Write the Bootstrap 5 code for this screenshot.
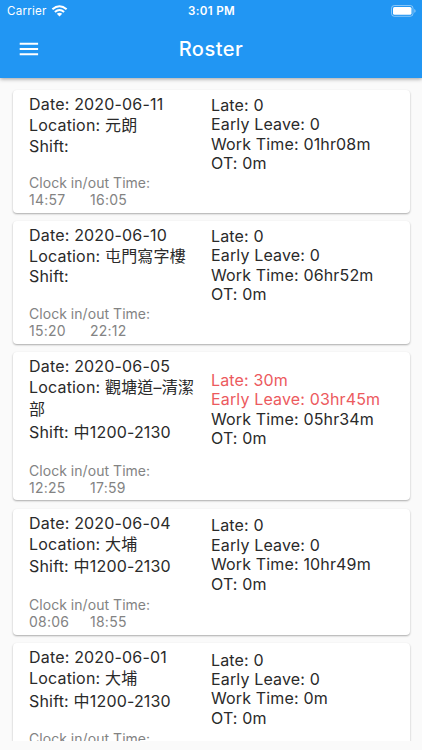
<!DOCTYPE html>
<html lang="zh-Hant">
<head>
<meta charset="utf-8">
<meta name="viewport" content="width=device-width, initial-scale=1">
<title>Roster</title>
<link href="https://cdn.jsdelivr.net/npm/bootstrap@5.3.0/dist/css/bootstrap.min.css" rel="stylesheet">
<style>
body{font-family:Inter,"Noto Sans CJK TC",sans-serif;background:#fafafa;color:#2a2a2a;height:750px}
.app-header{background:#2196f3;height:77.5px;box-shadow:0 1px 4px rgba(0,0,0,.38);z-index:2}
.status-bar{height:22px;font-size:11.6px;line-height:22px;padding:0 6px 0 7px}
.status-bar .carrier{letter-spacing:.22px}
.status-bar .clock{font-size:11.6px;font-weight:600;letter-spacing:.3px}
.title-bar{height:54px;padding:0 19px}
.title-bar h1{font-size:20px;font-weight:500;letter-spacing:.5px;line-height:24px}
.roster{height:663.5px;padding:12.3px 12.5px 0;gap:8.2px}
.shift-card{border-radius:4px;padding:4px 0 4px 16.5px;box-shadow:0 1px 2px rgba(0,0,0,.32)}
.shift-card.partial{height:126px}
.info{width:182px;font-size:16px;letter-spacing:.18px}
.info .latin{line-height:20px;height:20px}
.info .shift-empty{height:19.5px;line-height:18.6px}
.info .cjk{line-height:22.7px}
.punch{margin-top:18.2px;font-size:14px;line-height:17.2px;letter-spacing:.25px;color:#838383}
.punch .punch-label{letter-spacing:.04px}
.punch .time-in{width:61px}
.totals{font-size:16px;line-height:19.35px;letter-spacing:.15px;padding-bottom:33px}
.over{color:#ec5a5e}
</style>
<script src="https://cdn.jsdelivr.net/npm/bootstrap@5.3.0/dist/js/bootstrap.bundle.min.js"></script>
</head>
<body class="overflow-hidden">
<header class="app-header position-relative text-white">
  <div class="status-bar row g-0">
    <div class="col d-flex align-items-center gap-1">
      <span class="carrier">Carrier</span>
      <svg width="17" height="12" viewBox="0 0 17 12" fill="none" stroke="#fff" stroke-width="2.1"><path d="M1.4 4.3Q8.5-1.8 15.6 4.3M3.9 7Q8.5 3 13.1 7"/><path d="M8.5 11.5 5.8 8.8Q8.5 6.6 11.2 8.8Z" fill="#fff" stroke="none"/></svg>
    </div>
    <div class="col-auto clock">3:01 PM</div>
    <div class="col d-flex align-items-center justify-content-end">
      <svg width="25" height="12" viewBox="0 0 25 12"><rect x=".5" y=".5" width="21.5" height="10.8" rx="2.8" fill="none" stroke="#fff" stroke-opacity=".45"/><rect x="2" y="2" width="18.5" height="7.8" rx="1.5" fill="#fff"/><path d="M23.3 4v3.8q1.3-.5 1.3-1.9T23.3 4" fill="#fff" fill-opacity=".5"/></svg>
    </div>
  </div>
  <div class="title-bar row g-0 align-items-center">
    <div class="col d-flex"><svg width="20" height="14" viewBox="0 0 20 14"><path d="M.7 1.8h18.4M.7 7h18.4M.7 12.2h18.4" stroke="#fff" stroke-width="2"/></svg></div>
    <h1 class="col-auto m-0">Roster</h1>
    <div class="col"></div>
  </div>
</header>
<main class="roster d-flex flex-column overflow-hidden">
  <article class="shift-card bg-white d-flex flex-shrink-0">
    <div class="info flex-shrink-0">
      <div class="latin"><span>Date: 2020-06-11</span></div><div class="cjk"><span>Location: 元朗</span></div><div class="latin shift-empty"><span>Shift:</span></div>
      <div class="punch"><div class="punch-label"><span>Clock in/out Time:</span></div><div class="d-flex"><span class="time-in">14:57</span><span>16:05</span></div></div>
    </div>
    <div class="totals d-flex flex-column justify-content-center"><span>Late: 0</span><span>Early Leave: 0</span><span>Work Time: 01hr08m</span><span>OT: 0m</span></div>
  </article>
  <article class="shift-card bg-white d-flex flex-shrink-0">
    <div class="info flex-shrink-0">
      <div class="latin"><span>Date: 2020-06-10</span></div><div class="cjk"><span>Location: 屯門寫字樓</span></div><div class="latin shift-empty"><span>Shift:</span></div>
      <div class="punch"><div class="punch-label"><span>Clock in/out Time:</span></div><div class="d-flex"><span class="time-in">15:20</span><span>22:12</span></div></div>
    </div>
    <div class="totals d-flex flex-column justify-content-center"><span>Late: 0</span><span>Early Leave: 0</span><span>Work Time: 06hr52m</span><span>OT: 0m</span></div>
  </article>
  <article class="shift-card bg-white d-flex flex-shrink-0">
    <div class="info flex-shrink-0">
      <div class="latin"><span>Date: 2020-06-05</span></div><div class="cjk"><span>Location: 觀塘道–清潔<br>部</span></div><div class="cjk"><span>Shift: 中1200-2130</span></div>
      <div class="punch"><div class="punch-label"><span>Clock in/out Time:</span></div><div class="d-flex"><span class="time-in">12:25</span><span>17:59</span></div></div>
    </div>
    <div class="totals d-flex flex-column justify-content-center"><span class="over">Late: 30m</span><span class="over">Early Leave: 03hr45m</span><span>Work Time: 05hr34m</span><span>OT: 0m</span></div>
  </article>
  <article class="shift-card bg-white d-flex flex-shrink-0">
    <div class="info flex-shrink-0">
      <div class="latin"><span>Date: 2020-06-04</span></div><div class="cjk"><span>Location: 大埔</span></div><div class="cjk"><span>Shift: 中1200-2130</span></div>
      <div class="punch"><div class="punch-label"><span>Clock in/out Time:</span></div><div class="d-flex"><span class="time-in">08:06</span><span>18:55</span></div></div>
    </div>
    <div class="totals d-flex flex-column justify-content-center"><span>Late: 0</span><span>Early Leave: 0</span><span>Work Time: 10hr49m</span><span>OT: 0m</span></div>
  </article>
  <article class="shift-card partial bg-white d-flex flex-shrink-0">
    <div class="info flex-shrink-0">
      <div class="latin"><span>Date: 2020-06-01</span></div><div class="cjk"><span>Location: 大埔</span></div><div class="cjk"><span>Shift: 中1200-2130</span></div>
      <div class="punch"><div class="punch-label"><span>Clock in/out Time:</span></div></div>
    </div>
    <div class="totals d-flex flex-column justify-content-center"><span>Late: 0</span><span>Early Leave: 0</span><span>Work Time: 0m</span><span>OT: 0m</span></div>
  </article>
</main>
</body>
</html>
